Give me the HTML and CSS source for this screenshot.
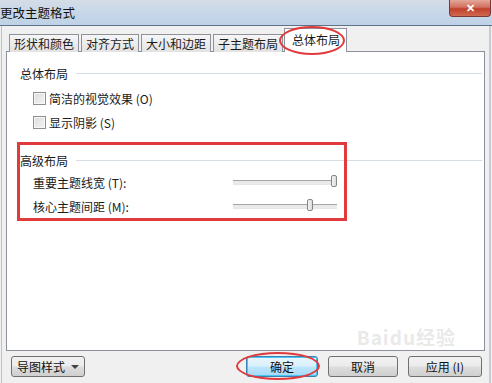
FILE: index.html
```html
<!DOCTYPE html>
<html lang="zh">
<head>
    <meta charset="UTF-8">
    <title>更改主题格式</title>
    <link rel="stylesheet" href="styles.css">
</head>
<body>
    <div class="window">
        <div class="titlebar">
            <span class="title">更改主题格式</span>
            <button class="close-btn">&#x2715;</button>
        </div>

        <div class="content">
            <div class="tabs">
                <div class="tab">形状和颜色</div>
                <div class="tab">对齐方式</div>
                <div class="tab">大小和边距</div>
                <div class="tab">子主题布局</div>
                <div class="tab active">总体布局</div>
                <div class="mark mark-tab"></div>
            </div>

            <div class="panel">
                <div class="group-title"><span>总体布局</span><i></i></div>
                <label class="check-row"><span class="box"></span>简洁的视觉效果 (O)</label>
                <label class="check-row"><span class="box"></span>显示阴影 (S)</label>

                <div class="group-title advanced"><span>高级布局</span><i></i></div>
                <div class="slider-row">
                    <span>重要主题线宽 (T):</span>
                    <div class="slider"><div class="thumb" style="left: 98px"></div></div>
                </div>
                <div class="slider-row">
                    <span>核心主题间距 (M):</span>
                    <div class="slider"><div class="thumb" style="left: 74px"></div></div>
                </div>

                <div class="mark mark-box"></div>
                <div class="watermark">Baidu经验</div>
            </div>

            <div class="footer">
                <button class="btn dropdown">导图样式 <span class="arrow"></span></button>
                <div class="actions">
                    <button class="btn ok">确定</button>
                    <button class="btn">取消</button>
                    <button class="btn">应用 (I)</button>
                    <div class="mark mark-ok"></div>
                </div>
            </div>
        </div>
    </div>
</body>
</html>
```

FILE: styles.css
```css
/* General Styling */
body {
    margin: 0;
    width: 492px;
    height: 383px;
    overflow: hidden;
    background: #f0f0f0;
    font-family: "Noto Sans CJK SC", "DejaVu Sans", sans-serif;
    font-size: 12px;
    color: #1a1a1a;
}

.window {
    height: 383px;
    border-left: 1px solid #b9c4cf;
    border-right: 2px solid #c3ccd6;
    margin-left: 1px;
    margin-right: 1px;
    box-sizing: border-box;
    position: relative;
}

/* Title bar */
.titlebar {
    height: 25px;
    margin-left: -2px;
    margin-right: -3px;
    background: linear-gradient(180deg, #d4dde7 0%, #c6d6e8 60%, #bed1e6 100%);
    border-bottom: 1px solid #5f7389;
    display: flex;
    align-items: center;
    justify-content: space-between;
}

.title {
    font-size: 12.5px;
    color: #111;
}

.close-btn {
    align-self: flex-start;
    width: 42px;
    height: 17px;
    margin-right: 1px;
    border: 1px solid #7a3a33;
    border-top: none;
    border-radius: 0 0 4px 4px;
    background: linear-gradient(180deg, #e3a79a 0%, #d2705f 45%, #c1402c 55%, #cf6a50 100%);
    color: white;
    font-size: 11px;
    font-weight: bold;
    line-height: 14px;
    padding: 0;
}

.content {
    padding: 3px 4px 0 4px;
}

/* Tabs */
.tabs {
    display: flex;
    align-items: flex-end;
    height: 22px;
    padding-left: 3px;
    position: relative;
    z-index: 2;
}

.tab {
    height: 18px;
    line-height: 18px;
    padding: 0 4px;
    margin-right: 2px;
    margin-bottom: -1px;
    border: 1px solid #8d9199;
    border-bottom: none;
    background: linear-gradient(180deg, #f6f6f6, #e2e2e2);
    font-size: 12px;
    color: #1a1a1a;
    box-sizing: border-box;
}

.tab.active {
    height: 24px;
    line-height: 22px;
    margin-left: -1px;
    padding: 0 6px 0 7px;
    background: white;
}

/* Panel */
.panel {
    height: 300px;
    box-sizing: border-box;
    background: white;
    border: 1px solid #8d9199;
    padding: 11px 0 0 13px;
    position: relative;
}

.group-title {
    display: flex;
    align-items: center;
    height: 20px;
    margin-right: 2px;
}

.group-title i {
    flex: 1;
    height: 1px;
    background: #d5dde3;
    margin-left: 8px;
}

.group-title.advanced {
    margin-top: 16px;
}

.check-row {
    display: flex;
    align-items: center;
    height: 24px;
    padding-left: 13px;
}

.check-row:first-of-type {
    margin-top: 3px;
}

.box {
    width: 11px;
    height: 11px;
    border: 1px solid #8e8f8f;
    background: linear-gradient(135deg, #dcdcdc, #f4f4f4);
    box-shadow: inset 0 0 0 1px #f7f7f7;
    margin-right: 3px;
}

.slider-row {
    display: grid;
    grid-template-columns: 200px 104px;
    align-items: center;
    height: 24px;
    padding-left: 13px;
}

.slider {
    position: relative;
    height: 3px;
    border-top: 1px solid #a6a6a6;
    border-bottom: 1px solid #e6e6e6;
    background: #e9e9e9;
}

.thumb {
    position: absolute;
    top: -6px;
    width: 4px;
    height: 10px;
    border: 1px solid #868686;
    border-radius: 2px;
    background: linear-gradient(90deg, #f4f4f4, #dcdcdc);
}

/* Annotations */
.mark {
    position: absolute;
    border: 3px solid #e03a3c;
    pointer-events: none;
}

.mark-tab {
    left: 273px;
    top: -3px;
    width: 62px;
    height: 25px;
    border-radius: 50%;
    border-width: 2.5px;
}

.mark-box {
    left: 10px;
    top: 90px;
    width: 324px;
    height: 73px;
}

.mark-ok {
    left: -10px;
    top: -4px;
    width: 80px;
    height: 24px;
    border-radius: 50%;
    border-width: 2.5px;
}

.watermark {
    position: absolute;
    right: 28px;
    bottom: 0;
    font-size: 19px;
    font-weight: bold;
    color: rgba(205, 205, 205, 0.45);
    letter-spacing: 1px;
}

/* Footer */
.footer {
    display: flex;
    justify-content: space-between;
    align-items: flex-start;
    height: 32px;
    padding: 5px 3px 0 5px;
}

.actions {
    display: flex;
    gap: 10px;
    position: relative;
}

.btn {
    height: 21px;
    border: 1px solid #707070;
    border-radius: 3px;
    background: linear-gradient(180deg, #f2f2f2 0%, #ebebeb 48%, #dddddd 52%, #cfcfcf 100%);
    font-family: inherit;
    font-size: 12px;
    color: #111;
    padding: 0;
    width: 70px;
}

.btn.ok {
    width: 72px;
    border-color: #3c7fb1;
    box-shadow: inset 0 0 0 1px #48c7f5;
    background: linear-gradient(180deg, #eaf6fd 0%, #d9f0fc 48%, #bee6fd 52%, #a7d9f5 100%);
}

.btn.dropdown {
    width: 74px;
    display: flex;
    align-items: center;
    justify-content: center;
    gap: 6px;
}

.arrow {
    width: 0;
    height: 0;
    border-left: 4px solid transparent;
    border-right: 4px solid transparent;
    border-top: 4px solid #444;
}

.actions .btn:last-of-type {
    width: 74px;
}
```
